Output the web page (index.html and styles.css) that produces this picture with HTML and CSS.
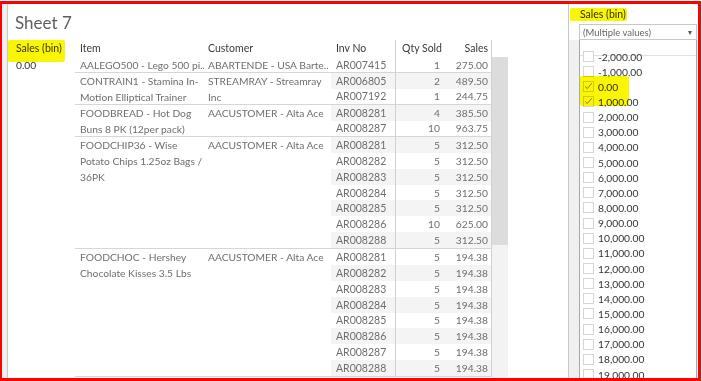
FILE: index.html
```html
<!DOCTYPE html>
<html>
<head>
<meta charset="utf-8">
<title>Sheet 7</title>
<link rel="stylesheet" href="styles.css">
</head>
<body>
<div class="frame">
  <div class="edge"></div>
  <div class="sheet">
    <h1 class="title">Sheet 7</h1>
    <div class="thead">
      <div class="c bin">Sales (bin)</div>
      <div class="c item">Item</div>
      <div class="c cust">Customer</div>
      <div class="c inv">Inv No</div>
      <div class="c qty">Qty Sold</div>
      <div class="c sales">Sales</div>
    </div>
    <div class="tbody">
      <div class="c bin bincol">0.00</div>
      <div class="groups">
        <div class="group n1">
          <div class="c item">AALEGO500 - Lego 500 pi..</div>
          <div class="c cust">ABARTENDE - USA Barte..</div>
          <div class="rows">
            <div class="row"><div class="c inv">AR007415</div><div class="c qty">1</div><div class="c sales">275.00</div></div>
          </div>
        </div>
        <div class="group n2">
          <div class="c item">CONTRAIN1 - Stamina In-<br>Motion Elliptical Trainer</div>
          <div class="c cust">STREAMRAY - Streamray<br>Inc</div>
          <div class="rows">
            <div class="row alt"><div class="c inv">AR006805</div><div class="c qty">2</div><div class="c sales">489.50</div></div>
            <div class="row"><div class="c inv">AR007192</div><div class="c qty">1</div><div class="c sales">244.75</div></div>
          </div>
        </div>
        <div class="group n2">
          <div class="c item">FOODBREAD - Hot Dog<br>Buns 8 PK (12per pack)</div>
          <div class="c cust">AACUSTOMER - Alta Ace</div>
          <div class="rows">
            <div class="row alt"><div class="c inv">AR008281</div><div class="c qty">4</div><div class="c sales">385.50</div></div>
            <div class="row"><div class="c inv">AR008287</div><div class="c qty">10</div><div class="c sales">963.75</div></div>
          </div>
        </div>
        <div class="group n7">
          <div class="c item">FOODCHIP36 - Wise<br>Potato Chips 1.25oz Bags /<br>36PK</div>
          <div class="c cust">AACUSTOMER - Alta Ace</div>
          <div class="rows">
            <div class="row alt"><div class="c inv">AR008281</div><div class="c qty">5</div><div class="c sales">312.50</div></div>
            <div class="row"><div class="c inv">AR008282</div><div class="c qty">5</div><div class="c sales">312.50</div></div>
            <div class="row alt"><div class="c inv">AR008283</div><div class="c qty">5</div><div class="c sales">312.50</div></div>
            <div class="row"><div class="c inv">AR008284</div><div class="c qty">5</div><div class="c sales">312.50</div></div>
            <div class="row alt"><div class="c inv">AR008285</div><div class="c qty">5</div><div class="c sales">312.50</div></div>
            <div class="row"><div class="c inv">AR008286</div><div class="c qty">10</div><div class="c sales">625.00</div></div>
            <div class="row alt"><div class="c inv">AR008288</div><div class="c qty">5</div><div class="c sales">312.50</div></div>
          </div>
        </div>
        <div class="group n8">
          <div class="c item">FOODCHOC - Hershey<br>Chocolate Kisses 3.5 Lbs</div>
          <div class="c cust">AACUSTOMER - Alta Ace</div>
          <div class="rows">
            <div class="row"><div class="c inv">AR008281</div><div class="c qty">5</div><div class="c sales">194.38</div></div>
            <div class="row alt"><div class="c inv">AR008282</div><div class="c qty">5</div><div class="c sales">194.38</div></div>
            <div class="row"><div class="c inv">AR008283</div><div class="c qty">5</div><div class="c sales">194.38</div></div>
            <div class="row alt"><div class="c inv">AR008284</div><div class="c qty">5</div><div class="c sales">194.38</div></div>
            <div class="row"><div class="c inv">AR008285</div><div class="c qty">5</div><div class="c sales">194.38</div></div>
            <div class="row alt"><div class="c inv">AR008286</div><div class="c qty">5</div><div class="c sales">194.38</div></div>
            <div class="row"><div class="c inv">AR008287</div><div class="c qty">5</div><div class="c sales">194.38</div></div>
            <div class="row alt"><div class="c inv">AR008288</div><div class="c qty">5</div><div class="c sales">194.38</div></div>
          </div>
        </div>
      </div>
      <div class="scroll"><div class="thumb"></div></div>
    </div>
  </div>
  <div class="panel">
    <div class="ptitle">Sales (bin)</div>
    <div class="dd"><span>(Multiple values)</span><span class="caret">&#9662;</span></div>
    <div class="lwrap">
      <div class="list">
        <div class="search"></div>
        <div class="items">
          <div class="opt"><span class="box"></span><span>-2,000.00</span></div>
          <div class="opt"><span class="box"></span><span>-1,000.00</span></div>
          <div class="opt"><span class="box on"><svg viewBox="0 0 11 11" width="9" height="9"><polyline points="1.5,5.5 4,8 9.5,1.5" fill="none" stroke="#666" stroke-width="1"/></svg></span><span>0.00</span></div>
          <div class="opt"><span class="box on"><svg viewBox="0 0 11 11" width="9" height="9"><polyline points="1.5,5.5 4,8 9.5,1.5" fill="none" stroke="#666" stroke-width="1"/></svg></span><span>1,000.00</span></div>
          <div class="opt"><span class="box"></span><span>2,000.00</span></div>
          <div class="opt"><span class="box"></span><span>3,000.00</span></div>
          <div class="opt"><span class="box"></span><span>4,000.00</span></div>
          <div class="opt"><span class="box"></span><span>5,000.00</span></div>
          <div class="opt"><span class="box"></span><span>6,000.00</span></div>
          <div class="opt"><span class="box"></span><span>7,000.00</span></div>
          <div class="opt"><span class="box"></span><span>8,000.00</span></div>
          <div class="opt"><span class="box"></span><span>9,000.00</span></div>
          <div class="opt"><span class="box"></span><span>10,000.00</span></div>
          <div class="opt"><span class="box"></span><span>11,000.00</span></div>
          <div class="opt"><span class="box"></span><span>12,000.00</span></div>
          <div class="opt"><span class="box"></span><span>13,000.00</span></div>
          <div class="opt"><span class="box"></span><span>14,000.00</span></div>
          <div class="opt"><span class="box"></span><span>15,000.00</span></div>
          <div class="opt"><span class="box"></span><span>16,000.00</span></div>
          <div class="opt"><span class="box"></span><span>17,000.00</span></div>
          <div class="opt"><span class="box"></span><span>18,000.00</span></div>
          <div class="opt"><span class="box"></span><span>19,000.00</span></div>
        </div>
      </div>
    </div>
  </div>
  <div class="hl hl-head"></div>
  <div class="hl hl-ptitle"></div>
  <div class="hl hl-checks"></div>
</div>
</body>
</html>
```

FILE: styles.css
```css
* { box-sizing: border-box; margin: 0; padding: 0; }
html, body { background: #fff; }
body {
  font-family: Lato, "Open Sans", sans-serif;
  font-size: 10.25px;
  color: #6e6e6e;
  width: 702px;
  height: 381px;
  overflow: hidden;
}
.frame {
  position: relative;
  display: flex;
  width: 701px;
  height: 380px;
  margin-top: 1px;
  border-style: solid;
  border-color: #f00;
  border-width: 3px 3px 3px 2px;
}
.edge { width: 6px; background: #f0f0f0; border-right: 1px solid #c9c9c9; }
.sheet { width: 560px; display: flex; flex-direction: column; }
.title {
  font-weight: 400;
  font-size: 17px;
  line-height: 20px;
  color: #5f5f5f;
  height: 36px;
  padding: 9px 0 0 7px;
}
.thead { display: flex; height: 17px; line-height: 17px; color: #3a3a3a; font-size: 10.5px; }
.c { padding: 0 5px; white-space: nowrap; }
.bin { width: 67px; padding-left: 8px; }
.item { width: 128px; line-height: 16px; }
.cust { width: 128px; line-height: 16px; }
.inv { width: 64px; }
.qty { width: 48px; border-left: 1px solid #d0d0d0; text-align: right; padding-right: 3px; }
.sales { width: 49px; border-right: 1px solid #d0d0d0; text-align: right; padding-right: 3px; }
.thead .item, .thead .cust { line-height: 17px; }
.thead .qty { text-align: left; padding-left: 6px; }
.tbody { display: flex; flex: 1; }
.bincol { line-height: 16px; color: #333; }
.groups { display: flex; flex-direction: column; }
.group { display: flex; border-bottom: 1px solid #d6d6d6; }
.n1 { height: 16px; }
.n2 { height: 32px; }
.n7 { height: 112px; }
.n8 { height: 128px; }
.rows { display: flex; flex-direction: column; }
.row { flex: 1; display: flex; align-items: center; }
.row .c { height: 100%; display: flex; align-items: center; }
.row .inv { font-size: 10.5px; }
.row .qty, .row .sales { justify-content: flex-end; }
.row.alt { background: #f4f4f4; }
.scroll { width: 16px; background: #f3f3f3; }
.thumb { height: 188px; background: #dcdcdc; }
.panel {
  width: 130px;
  border-left: 1px solid #c9c9c9;
  display: flex;
  flex-direction: column;
}
.ptitle { height: 20px; padding: 3px 0 0 11px; line-height: 14px; color: #333; font-size: 10.5px; }
.dd {
  margin: 0 1px 0 10px;
  height: 16px;
  border: 1px solid #c8c8c8;
  display: flex;
  align-items: center;
  justify-content: space-between;
  padding: 0 4px 0 3px;
  color: #666;
  font-size: 9.5px;
}
.caret { font-size: 8px; color: #555; }
.lwrap { flex: 1; min-height: 0; display: flex; background: #f0f0f0; padding: 0 1px 0 10px; }
.list {
  flex: 1;
  background: #fff;
  border-left: 1px solid #a9a9a9;
  border-right: 1px solid #a9a9a9;
  overflow: hidden;
}
.search { height: 16px; border-bottom: 1px solid #e2e2e2; }
.items { margin-top: -7px; }
.opt { height: 15.15px; display: flex; align-items: center; padding-left: 3px; gap: 4px; color: #333; }
.box {
  width: 11px;
  height: 11px;
  border: 1px solid #d6d6d6;
  background: #fff;
  display: flex;
  align-items: center;
  justify-content: center;
}
.hl {
  position: absolute;
  background: rgb(250, 244, 5);
  mix-blend-mode: multiply;
  border-radius: 2px;
}
.hl-head { left: 6px; top: 36px; width: 57px; height: 22px; }
.hl-ptitle { left: 568px; top: 4px; width: 57px; height: 13px; }
.hl-checks { left: 578px; top: 72px; width: 49px; height: 30px; }
```
